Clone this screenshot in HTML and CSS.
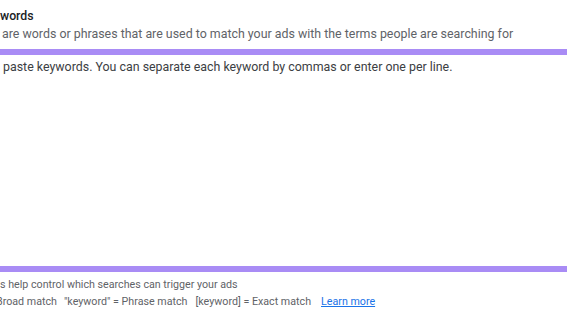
FILE: index.html
```html
<!DOCTYPE html>
<html lang="en">
<head>
<meta charset="utf-8">
<link rel="stylesheet" href="styles.css">
</head>
<body>
<div class="page">
  <div class="head">
    <div class="title">words</div>
    <div class="desc">are words or phrases that are used to match your ads with the terms people are searching for</div>
  </div>
  <div class="field">
    <div class="placeholder">paste keywords. You can separate each keyword by commas or enter one per line.</div>
  </div>
  <div class="foot">
    <div class="hint">s help control which searches can trigger your ads</div>
    <div class="types"><span class="cut">Broad match</span><span class="gap">"keyword" = Phrase match</span><span class="gap gap-wide">[keyword] = Exact match</span><a class="learn" href="#">Learn more</a></div>
  </div>
</div>
</body>
</html>
```

FILE: styles.css
```css
html, body {
  margin: 0;
  padding: 0;
  background: #ffffff;
  overflow: hidden;
}
.page {
  width: 567px;
  height: 317px;
  font-family: Roboto, "Noto Sans", Arial, sans-serif;
  display: flex;
  flex-direction: column;
}
.head {
  padding-top: 7px;
}
.title {
  font-size: 12.3px;
  line-height: 18px;
  font-weight: 500;
  color: #202124;
}
.desc {
  font-size: 12.4px;
  line-height: 18px;
  color: #5f6368;
  padding-left: 2px;
}
.field {
  margin-top: 6px;
  height: 211px;
  border-top: 6px solid #a98cf5;
  border-bottom: 6px solid #a98cf5;
}
.placeholder {
  font-size: 12.4px;
  line-height: 18px;
  color: #3c4043;
  padding-left: 3px;
  padding-top: 3px;
}
.foot {
  padding-top: 4px;
  font-size: 10.7px;
  line-height: 17px;
  color: #5f6368;
}
.types {
  white-space: nowrap;
  text-indent: -4px;
}
.gap {
  margin-left: 7px;
}
.gap-wide {
  margin-left: 8px;
}
.learn {
  margin-left: 10px;
  color: #1a73e8;
  text-decoration: underline;
}
```
